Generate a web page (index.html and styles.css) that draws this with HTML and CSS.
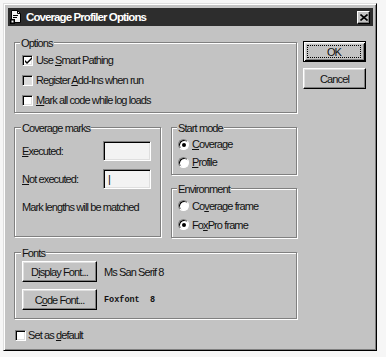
FILE: index.html
```html
<!DOCTYPE html>
<html lang="en">
<head>
    <meta charset="UTF-8">
    <meta name="viewport" content="width=device-width, initial-scale=1.0">
    <title>Coverage Profiler Options</title>
    <link rel="stylesheet" href="styles.css">
</head>
<body>
    <div class="window">
        <div class="titlebar">
            <svg class="app-icon" viewBox="0 0 12 14" width="12" height="14">
                <path d="M1.5 0.5h6l3 3v9h-9z" fill="#f2f2f2" stroke="#000"/>
                <path d="M7.5 0.5v3h3" fill="none" stroke="#000"/>
                <rect x="3" y="5" width="5" height="1" fill="#000"/>
                <rect x="3" y="7" width="4" height="1" fill="#000"/>
                <rect x="0" y="9" width="5" height="5" fill="#000"/>
                <rect x="1.5" y="10.5" width="2" height="2" fill="#f2f2f2"/>
            </svg>
            <span class="title">Coverage Profiler Options</span>
            <span class="close-btn">
                <svg viewBox="0 0 8 7" width="8" height="7">
                    <path d="M0.5 0.5l7 6M7.5 0.5l-7 6" stroke="#000" stroke-width="1.6"/>
                </svg>
            </span>
        </div>

        <div class="dialog-body">
            <div class="dialog-main">
                <div class="panels">
                    <div class="group group-options">
                        <div class="group-label">Options</div>
                        <div class="check-row">
                            <span class="checkbox">
                                <svg viewBox="0 0 7 7" width="7" height="7"><path d="M0 3l2 2 5-5v2l-5 5-2-2z" fill="#000"/></svg>
                            </span>
                            <span>Use <u>S</u>mart Pathing</span>
                        </div>
                        <div class="check-row">
                            <span class="checkbox checkbox-grey"></span>
                            <span>Register <u>A</u>dd-Ins when run</span>
                        </div>
                        <div class="check-row">
                            <span class="checkbox"></span>
                            <span><u>M</u>ark all code while log loads</span>
                        </div>
                    </div>

                    <div class="panel-row">
                        <div class="group group-marks">
                            <div class="group-label">Coverage marks</div>
                            <div class="mark-fields">
                                <span><u>E</u>xecuted:</span>
                                <span class="field"></span>
                                <span><u>N</u>ot executed:</span>
                                <span class="field">|</span>
                            </div>
                            <p class="note">Mark lengths will be matched</p>
                        </div>

                        <div class="mode-col">
                            <div class="group group-start">
                                <div class="group-label">Start mode</div>
                                <div class="radio-row">
                                    <span class="radio selected"></span>
                                    <span><u>C</u>overage</span>
                                </div>
                                <div class="radio-row">
                                    <span class="radio"></span>
                                    <span><u>P</u>rofile</span>
                                </div>
                            </div>
                            <div class="group group-env">
                                <div class="group-label">Environment</div>
                                <div class="radio-row env-row">
                                    <span class="radio"></span>
                                    <span>Co<u>v</u>erage frame</span>
                                </div>
                                <div class="radio-row env-row">
                                    <span class="radio selected"></span>
                                    <span>Fo<u>x</u>Pro frame</span>
                                </div>
                            </div>
                        </div>
                    </div>

                    <div class="group group-fonts">
                        <div class="group-label">Fonts</div>
                        <div class="font-row">
                            <button type="button" class="btn btn-font">D<u>i</u>splay Font...</button>
                            <span>Ms San Serif 8</span>
                        </div>
                        <div class="font-row">
                            <button type="button" class="btn btn-font">C<u>o</u>de Font...</button>
                            <span class="code-font">Foxfont&nbsp;&nbsp;8</span>
                        </div>
                    </div>
                </div>

                <div class="actions">
                    <button type="button" class="btn btn-default"><span class="focus-ring">OK</span></button>
                    <button type="button" class="btn">Cancel</button>
                </div>
            </div>

            <div class="check-row default-row">
                <span class="checkbox"></span>
                <span>Set as <u>d</u>efault</span>
            </div>
        </div>
    </div>
</body>
</html>
```

FILE: styles.css
```css
* {
    margin: 0;
    padding: 0;
    box-sizing: border-box;
}

body {
    background: #f6f6f6;
    font-family: 'Liberation Sans', Arial, sans-serif;
    font-size: 11px;
    letter-spacing: -0.9px;
    color: #111;
}

u {
    text-underline-offset: 1px;
}

.window {
    width: 374px;
    height: 348px;
    margin: 3px 0 0 3px;
    background: #c3c3c3;
    border: 1px solid;
    border-color: #dfdfdf #000 #000 #dfdfdf;
    box-shadow: inset 1px 1px #fff, inset -1px -1px #808080;
    padding: 4px 3px 0 4px;
    display: flex;
    flex-direction: column;
}

/* title bar */
.titlebar {
    height: 18px;
    background: #2d2d2d;
    display: flex;
    align-items: center;
    padding: 0 3px 0 2px;
    color: #fff;
}

.app-icon {
    margin-right: 4px;
    flex-shrink: 0;
}

.title {
    flex: 1;
    font-weight: bold;
    font-size: 11.5px;
    letter-spacing: -0.9px;
}

.close-btn {
    width: 13px;
    height: 13px;
    background: #c3c3c3;
    border: 1px solid;
    border-color: #fff #000 #000 #fff;
    box-shadow: inset -1px -1px #808080;
    display: flex;
    align-items: center;
    justify-content: center;
}

/* body */
.dialog-body {
    flex: 1;
    padding: 15px 0 0 6px;
}

.dialog-main {
    display: flex;
    gap: 6px;
}

.panels {
    width: 283px;
}

.actions {
    display: flex;
    flex-direction: column;
    gap: 6px;
}

/* etched group boxes */
.group {
    border: 1px solid #808080;
    box-shadow: inset 1px 1px #fff, 1px 1px #fff;
    padding: 0 6px;
}

.group-label {
    display: table;
    margin: -6px 0 1px -1px;
    padding: 0 1px;
    line-height: 12px;
    background: #c3c3c3;
}

.group-options {
    margin-top: 1px;
    height: 71px;
}

.check-row {
    display: flex;
    align-items: center;
    gap: 3px;
    height: 20px;
}

.group-options .check-row {
    padding-left: 1px;
}

.checkbox {
    width: 11px;
    height: 11px;
    background: #fff;
    border: 1px solid;
    border-color: #808080 #fff #fff #808080;
    box-shadow: inset 1px 1px #000, inset -1px -1px #dfdfdf;
    display: flex;
    align-items: center;
    justify-content: center;
    flex-shrink: 0;
}

.checkbox svg {
    margin: 1px 0 0 1px;
}

.checkbox-grey {
    background: #dcdcdc;
}

.panel-row {
    display: flex;
    align-items: flex-start;
    gap: 10px;
    margin-top: 14px;
}

.group-marks {
    width: 147px;
    height: 110px;
    padding: 0 7px;
}

.mark-fields {
    display: grid;
    grid-template-columns: 81px 48px;
    row-gap: 8px;
    align-items: center;
    margin-top: 7px;
}

.field {
    height: 20px;
    background: #f3f3f3;
    border: 1px solid;
    border-color: #808080 #fff #fff #808080;
    box-shadow: inset 1px 1px #000, inset -1px -1px #dfdfdf;
    padding: 2px 0 0 4px;
    line-height: 14px;
}

.note {
    margin-top: 12px;
    line-height: 12px;
}

.mode-col {
    width: 126px;
}

.group-start {
    height: 48px;
}

.group-env {
    height: 50px;
    margin-top: 13px;
}

.radio-row {
    display: flex;
    align-items: center;
    gap: 3px;
    height: 18px;
}

.env-row {
    height: 19px;
}

.radio {
    width: 11px;
    height: 11px;
    border-radius: 50%;
    background: #fff;
    border: 1px solid;
    border-color: #808080 #fff #fff #808080;
    box-shadow: inset 1px 1px #000;
    display: flex;
    align-items: center;
    justify-content: center;
    flex-shrink: 0;
}

.radio.selected::after {
    content: '';
    width: 4px;
    height: 4px;
    border-radius: 50%;
    background: #000;
    margin: 1px 0 0 1px;
}

.group-fonts {
    height: 67px;
    margin-top: 14px;
    padding: 0 7px;
}

.font-row {
    display: flex;
    align-items: center;
    gap: 7px;
    margin-top: 2px;
}

.font-row + .font-row {
    margin-top: 7px;
}

.code-font {
    font-family: 'Liberation Mono', 'Courier New', monospace;
    font-weight: bold;
    font-size: 8.5px;
    letter-spacing: 0;
}

/* buttons */
.btn {
    width: 63px;
    height: 21px;
    font: inherit;
    letter-spacing: inherit;
    color: #111;
    background: #c3c3c3;
    border: 1px solid;
    border-color: #fff #000 #000 #fff;
    box-shadow: inset -1px -1px #808080, inset 1px 1px #dfdfdf;
    padding: 0;
}

.btn-font {
    width: 75px;
    flex-shrink: 0;
}

.btn-default {
    border-color: #000;
    box-shadow: inset 1px 1px #fff, inset -1px -1px #000, inset 2px 2px #dfdfdf, inset -2px -2px #808080;
    padding: 3px 4px 3px 3px;
}

.focus-ring {
    display: flex;
    align-items: center;
    justify-content: center;
    height: 100%;
    border: 1px dotted #000;
}

.default-row {
    height: 12px;
    margin-top: 10px;
    padding-left: 1px;
    gap: 2px;
}
```
